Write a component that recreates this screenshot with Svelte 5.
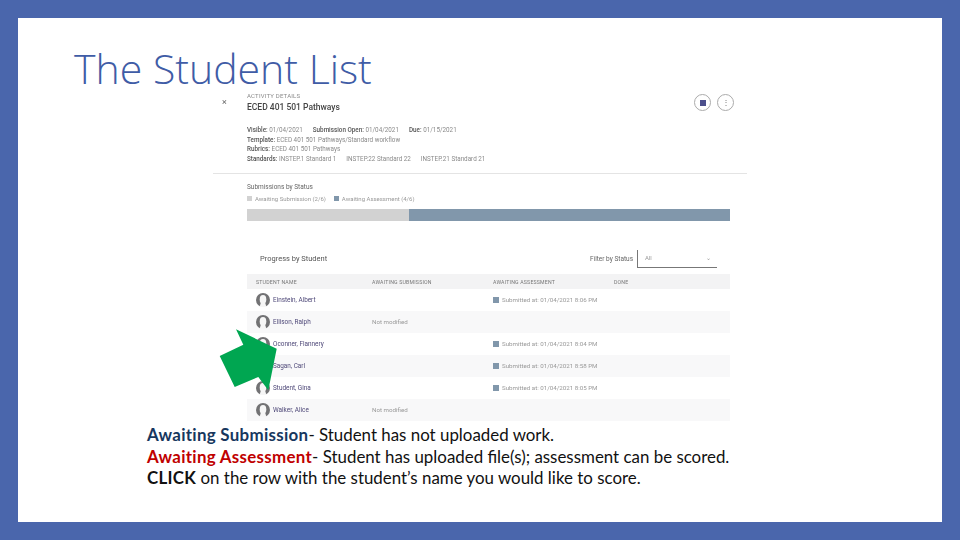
<script>
    const rows = [
        { name: 'Einstein, Albert', sub: '', assess: 'Submitted at: 01/04/2021 8:06 PM' },
        { name: 'Ellison, Ralph', sub: 'Not modified', assess: '' },
        { name: 'Oconner, Flannery', sub: '', assess: 'Submitted at: 01/04/2021 8:04 PM' },
        { name: 'Sagan, Carl', sub: '', assess: 'Submitted at: 01/04/2021 8:58 PM' },
        { name: 'Student, Gina', sub: '', assess: 'Submitted at: 01/04/2021 8:05 PM' },
        { name: 'Walker, Alice', sub: 'Not modified', assess: '' }
    ];
</script>

<div class="slide">
    <h1 class="title">The Student List</h1>

    <div class="shot">
        <div class="top soft">
            <span class="close">×</span>
            <div class="heading">
                <div class="eyebrow">ACTIVITY DETAILS</div>
                <div class="name">ECED 401 501 Pathways</div>
            </div>
            <div class="round-buttons">
                <span class="round"><i class="square"></i></span>
                <span class="round dots">⋮</span>
            </div>
        </div>

        <div class="meta soft">
            <div class="meta-line dates">
                <span><b>Visible:</b> 01/04/2021</span>
                <span><b>Submission Open:</b> 01/04/2021</span>
                <span><b>Due:</b> 01/15/2021</span>
            </div>
            <div class="meta-line"><b>Template:</b> ECED 401 501 Pathways/Standard workflow</div>
            <div class="meta-line"><b>Rubrics:</b> ECED 401 501 Pathways</div>
            <div class="meta-line dates">
                <span><b>Standards:</b> INSTEP.1 Standard 1</span>
                <span>INSTEP.22 Standard 22</span>
                <span>INSTEP.21 Standard 21</span>
            </div>
        </div>

        <div class="status soft">
            <div class="status-title">Submissions by Status</div>
            <div class="legend">
                <span><i class="swatch light"></i>Awaiting Submission (2/6)</span>
                <span><i class="swatch"></i>Awaiting Assessment (4/6)</span>
            </div>
            <div class="bar">
                <div class="bar-part light" style="width: 33.5%"></div>
                <div class="bar-part" style="width: 66.5%"></div>
            </div>
        </div>

        <div class="card soft">
            <div class="card-head">
                <span class="card-title">Progress by Student</span>
                <div class="filter">
                    <span class="filter-label">Filter by Status</span>
                    <div class="select"><span>All</span><span class="caret">⌄</span></div>
                </div>
            </div>
            <div class="row header">
                <span>STUDENT NAME</span>
                <span>AWAITING SUBMISSION</span>
                <span>AWAITING ASSESSMENT</span>
                <span>DONE</span>
            </div>
            {#each rows as r, i}
                <div class="row" class:alt={i % 2 === 1}>
                    <span class="student">
                        <svg class="avatar" viewBox="0 0 14 14" width="14" height="14">
                            <circle cx="7" cy="7" r="7" fill="#727274" />
                            <ellipse cx="7" cy="6.4" rx="3.3" ry="4.4" fill="#f6f6f6" />
                            <path d="M5 9 L3.6 14 H10.4 L9 9 Z" fill="#f6f6f6" />
                        </svg>
                        {r.name}
                    </span>
                    <span class="grey">{r.sub}</span>
                    <span class="grey">
                        {#if r.assess}<i class="swatch big"></i>{r.assess}{/if}
                    </span>
                    <span></span>
                </div>
            {/each}
        </div>

        <svg class="arrow" viewBox="0 0 58 62" width="58" height="62">
            <polygon points="17,0.3 57.7,19.7 49.3,61.3 39.3,48 15.7,58 0.7,27 24.3,15.7" fill="#00a651" />
        </svg>
    </div>

    <div class="caption">
        <p><b class="navy">Awaiting Submission</b>- Student has not uploaded work.</p>
        <p><b class="red">Awaiting Assessment</b>- Student has uploaded file(s); assessment can be scored.</p>
        <p><b>CLICK</b> on the row with the student’s name you would like to score.</p>
    </div>
</div>

<style>
    :global(body) {
        margin: 0;
    }

    .slide {
        width: 960px;
        height: 540px;
        box-sizing: border-box;
        border: 18px solid #4a66ac;
        background-color: #ffffff;
        overflow: hidden;
    }

    .title {
        margin: 0 0 0 56px;
        height: 70px;
        font-family: "Open Sans", sans-serif;
        font-weight: 300;
        font-size: 41px;
        line-height: 100px;
        color: #3f5ca6;
        white-space: nowrap;
    }

    .shot {
        position: relative;
        margin-left: 195px;
        width: 534px;
        height: 332px;
        box-sizing: border-box;
        background-color: #ffffff;
        font-family: Roboto, sans-serif;
        color: #555;
    }

    .soft {
        filter: blur(0.35px);
    }

    .top {
        display: flex;
        padding: 4px 9px 0 9px;
        height: 29px;
        box-sizing: border-box;
    }

    .close {
        width: 25px;
        font-size: 9px;
        line-height: 20px;
        color: #666;
    }

    .heading {
        flex: 1;
    }

    .eyebrow {
        font-size: 6px;
        line-height: 8px;
        color: #8a8a8a;
        letter-spacing: 0.2px;
    }

    .name {
        font-size: 8.5px;
        font-weight: 500;
        line-height: 14px;
        color: #444;
    }

    .round-buttons {
        display: flex;
        gap: 6px;
        margin-top: 2px;
        margin-right: 4px;
    }

    .round {
        display: flex;
        align-items: center;
        justify-content: center;
        width: 17px;
        height: 17px;
        box-sizing: border-box;
        border: 1px solid #aaa;
        border-radius: 50%;
        font-size: 8px;
        color: #777;
    }

    .square {
        width: 6px;
        height: 6px;
        background-color: #4c4f8c;
    }

    .meta {
        margin-top: 9px;
        padding: 0 0 4px 34px;
        height: 43px;
        border-bottom: 1px solid #e4e4e4;
    }

    .meta-line {
        height: 9.67px;
        font-size: 6.3px;
        line-height: 9.67px;
        color: #8a8a8a;
        white-space: nowrap;
    }

    .meta-line b {
        font-weight: 500;
        color: #555;
    }

    .dates {
        display: flex;
        gap: 10px;
    }

    .status {
        margin-top: 9px;
        padding: 0 17px 0 34px;
    }

    .status-title {
        font-size: 6.5px;
        line-height: 9px;
        color: #666;
    }

    .legend {
        display: flex;
        gap: 8px;
        margin-top: 2px;
        font-size: 6px;
        line-height: 9px;
        color: #999;
    }

    .swatch {
        display: inline-block;
        width: 5px;
        height: 5px;
        margin-right: 3px;
        background-color: #8197ab;
    }

    .swatch.light {
        background-color: #d2d2d2;
    }

    .swatch.big {
        width: 6px;
        height: 6px;
        vertical-align: -0.5px;
    }

    .bar {
        display: flex;
        height: 12px;
        margin-top: 6px;
    }

    .bar-part {
        background-color: #8197ab;
    }

    .bar-part.light {
        background-color: #d2d2d2;
    }

    .card {
        margin: 22px 17px 0 34px;
    }

    .card-head {
        display: flex;
        justify-content: space-between;
        align-items: center;
        height: 31px;
        padding: 0 13px 0 13px;
    }

    .card-title {
        font-size: 7.5px;
        color: #555;
    }

    .filter {
        display: flex;
        align-items: center;
        gap: 4px;
    }

    .filter-label {
        font-size: 6.5px;
        color: #666;
    }

    .select {
        display: flex;
        justify-content: space-between;
        width: 80px;
        height: 18px;
        box-sizing: border-box;
        padding: 4px 6px 0 7px;
        border-left: 1px solid #777;
        border-bottom: 1px solid #777;
        font-size: 6px;
        color: #999;
    }

    .row {
        display: grid;
        grid-template-columns: 116px 121px 121px 1fr;
        align-items: center;
        height: 22px;
        padding-left: 9px;
        font-size: 6.2px;
    }

    .row.alt {
        background-color: #f8f8f9;
    }

    .row.header {
        height: 15px;
        background-color: #f3f3f4;
        font-size: 5.2px;
        color: #777;
        letter-spacing: 0.2px;
    }

    .student {
        display: flex;
        align-items: center;
        gap: 3px;
        font-size: 6.4px;
        color: #4e4878;
    }

    .avatar {
        flex: none;
    }

    .grey {
        color: #999;
        white-space: nowrap;
    }

    .arrow {
        position: absolute;
        left: 6px;
        top: 241px;
        overflow: visible;
    }

    .caption {
        margin: 4px 0 0 129px;
        font-family: Lato, sans-serif;
        font-size: 16.9px;
        line-height: 21.5px;
        color: #111;
    }

    .caption p {
        margin: 0;
        white-space: nowrap;
    }

    .caption b {
        letter-spacing: 0.3px;
    }

    .navy {
        color: #17375e;
    }

    .red {
        color: #c00000;
    }
</style>
